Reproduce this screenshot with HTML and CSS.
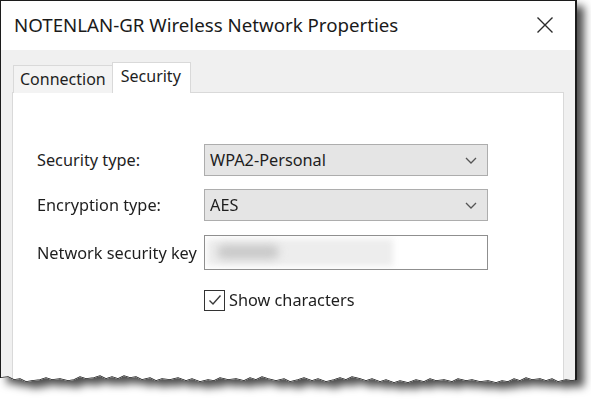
FILE: index.html
```html
<!DOCTYPE html>
<html>
<head>
<meta charset="utf-8">
<link rel="stylesheet" href="styles.css">
</head>
<body>
<div class="frame">
  <div class="window">
    <div class="titlebar">
      <span class="title">NOTENLAN-GR Wireless Network Properties</span>
      <svg class="close" width="18" height="18" viewBox="0 0 18 18"><path d="M1.5 1.5 L16.5 16.5 M16.5 1.5 L1.5 16.5" stroke="#2b2b2b" stroke-width="1.4" fill="none"/></svg>
    </div>
    <div class="content">
      <div class="tabs">
        <div class="tab">Connection</div>
        <div class="tab active">Security</div>
      </div>
      <div class="panel">
        <div class="row">
          <span class="label">Security type:</span>
          <div class="select"><span>WPA2-Personal</span><svg class="chev" width="12" height="7" viewBox="0 0 12 7"><path d="M1 1 L6 6 L11 1" stroke="#555" stroke-width="1.3" fill="none"/></svg></div>
        </div>
        <div class="row">
          <span class="label">Encryption type:</span>
          <div class="select"><span>AES</span><svg class="chev" width="12" height="7" viewBox="0 0 12 7"><path d="M1 1 L6 6 L11 1" stroke="#555" stroke-width="1.3" fill="none"/></svg></div>
        </div>
        <div class="row key-row">
          <span class="label">Network security key</span>
          <div class="input"><div class="blur-light"></div><div class="blur-dark"></div></div>
        </div>
        <div class="row check-row">
          <span class="label"></span>
          <label class="check"><span class="box"><svg width="16" height="16" viewBox="0 0 16 16"><path d="M2.5 8.5 L6 12 L13.5 3.5" stroke="#3a3a3a" stroke-width="1.4" fill="none"/></svg></span><span>Show characters</span></label>
        </div>
      </div>
    </div>
    <svg class="torn" width="577" height="392" viewBox="0 0 577 392"><polyline fill="none" stroke="#1c1c1c" stroke-width="1.4" points="0,378 8,377 14,380 20,379 26,382 32,381 40,380 46,378 52,380 60,379 68,381 74,380 80,377 86,379 94,378 100,376 106,379 112,377 118,379 124,376 130,378 136,377 142,380 150,378 156,381 162,379 170,380 178,378 186,381 192,379 200,382 208,380 214,381 220,378 228,380 236,379 244,381 250,378 256,380 262,377 268,379 276,381 284,379 290,382 298,380 304,378 312,381 318,379 326,382 334,380 340,378 346,380 352,377 360,379 366,381 372,379 380,382 386,380 394,383 400,381 408,383 416,380 424,382 430,379 436,381 444,380 452,382 458,379 466,381 472,380 480,382 488,381 496,383 502,381 508,382 514,379 520,381 526,378 532,380 540,379 546,381 552,379 558,382 566,380 572,381 577,380"/></svg>
  </div>
</div>
</body>
</html>
```
FILE: styles.css
```css
html, body {
  margin: 0;
  padding: 0;
  background: #ffffff;
}
body {
  width: 591px;
  height: 400px;
  overflow: hidden;
  font-family: "Noto Sans", "Open Sans", sans-serif;
  color: #1e1e1e;
}
.frame {
  width: 577px;
  filter: drop-shadow(7px 6px 4px rgba(0, 0, 0, 0.7));
}
.window {
  position: relative;
  box-sizing: border-box;
  width: 577px;
  height: 392px;
  border-top: 1px solid #1c1c1c;
  border-left: 1px solid #1c1c1c;
  border-right: 2px solid #1c1c1c;
  background: #f0f0f0;
  display: flex;
  flex-direction: column;
  clip-path: polygon(0px 0px, 577px 0px, 577px 380px, 572px 381px, 566px 380px, 558px 382px, 552px 379px, 546px 381px, 540px 379px, 532px 380px, 526px 378px, 520px 381px, 514px 379px, 508px 382px, 502px 381px, 496px 383px, 488px 381px, 480px 382px, 472px 380px, 466px 381px, 458px 379px, 452px 382px, 444px 380px, 436px 381px, 430px 379px, 424px 382px, 416px 380px, 408px 383px, 400px 381px, 394px 383px, 386px 380px, 380px 382px, 372px 379px, 366px 381px, 360px 379px, 352px 377px, 346px 380px, 340px 378px, 334px 380px, 326px 382px, 318px 379px, 312px 381px, 304px 378px, 298px 380px, 290px 382px, 284px 379px, 276px 381px, 268px 379px, 262px 377px, 256px 380px, 250px 378px, 244px 381px, 236px 379px, 228px 380px, 220px 378px, 214px 381px, 208px 380px, 200px 382px, 192px 379px, 186px 381px, 178px 378px, 170px 380px, 162px 379px, 156px 381px, 150px 378px, 142px 380px, 136px 377px, 130px 378px, 124px 376px, 118px 379px, 112px 377px, 106px 379px, 100px 376px, 94px 378px, 86px 379px, 80px 377px, 74px 380px, 68px 381px, 60px 379px, 52px 380px, 46px 378px, 40px 380px, 32px 381px, 26px 382px, 20px 379px, 14px 380px, 8px 377px, 0px 378px);
}
.titlebar {
  height: 49px;
  background: #ffffff;
  display: flex;
  align-items: center;
  justify-content: space-between;
  padding: 0 21px 0 13px;
  flex: none;
}
.title {
  font-size: 18.7px;
  color: #1a1a1a;
  padding-bottom: 2px;
}
.close {
  display: block;
  margin-bottom: 2px;
}
.content {
  flex: 1;
  padding: 12px 11px 0 11px;
  display: flex;
  flex-direction: column;
}
.tabs {
  display: flex;
  align-items: flex-end;
  padding-left: 1px;
  position: relative;
  z-index: 1;
  margin-bottom: -1px;
}
.tab {
  box-sizing: border-box;
  height: 28px;
  padding: 0 6px;
  border: 1px solid #d9d9d9;
  border-bottom: none;
  background: #f3f3f3;
  font-size: 16px;
  line-height: 27px;
  color: #1e1e1e;
}
.tab.active {
  height: 31px;
  background: #ffffff;
  border-color: #d9d9d9;
  padding: 0 9px 0 8px;
  line-height: 26px;
  margin-left: -1px;
}
.panel {
  flex: 1;
  background: #ffffff;
  border: 1px solid #d9d9d9;
  padding: 51px 0 0 24px;
  display: flex;
  flex-direction: column;
}
.row {
  display: flex;
  align-items: center;
  margin-bottom: 13px;
}
.key-row {
  margin-top: 1px;
}
.label {
  width: 167px;
  flex: none;
  font-size: 16.3px;
}
.select {
  box-sizing: border-box;
  width: 284px;
  height: 32px;
  background: #e5e5e5;
  border: 1px solid #adadad;
  display: flex;
  align-items: center;
  justify-content: space-between;
  padding: 0 10px 0 5px;
  font-size: 16.3px;
}
.chev {
  display: block;
}
.input {
  box-sizing: border-box;
  width: 284px;
  height: 35px;
  background: #ffffff;
  border: 1px solid #8f8f8f;
  position: relative;
  overflow: hidden;
}
.blur-light {
  position: absolute;
  left: 2px;
  top: 3px;
  width: 186px;
  height: 27px;
  background: #ededed;
  filter: blur(3px);
}
.blur-dark {
  position: absolute;
  left: 12px;
  top: 9px;
  width: 62px;
  height: 14px;
  border-radius: 7px;
  background: #c9c9c9;
  filter: blur(4px);
}
.check-row {
  margin-top: 6px;
}
.check {
  display: flex;
  align-items: center;
  font-size: 16.3px;
}
.box {
  box-sizing: border-box;
  width: 21px;
  height: 21px;
  border: 1px solid #333333;
  background: #ffffff;
  display: flex;
  align-items: center;
  justify-content: center;
  margin-right: 4px;
}
.box svg {
  display: block;
}
.torn {
  position: absolute;
  left: -1px;
  top: -1px;
  pointer-events: none;
}
```
